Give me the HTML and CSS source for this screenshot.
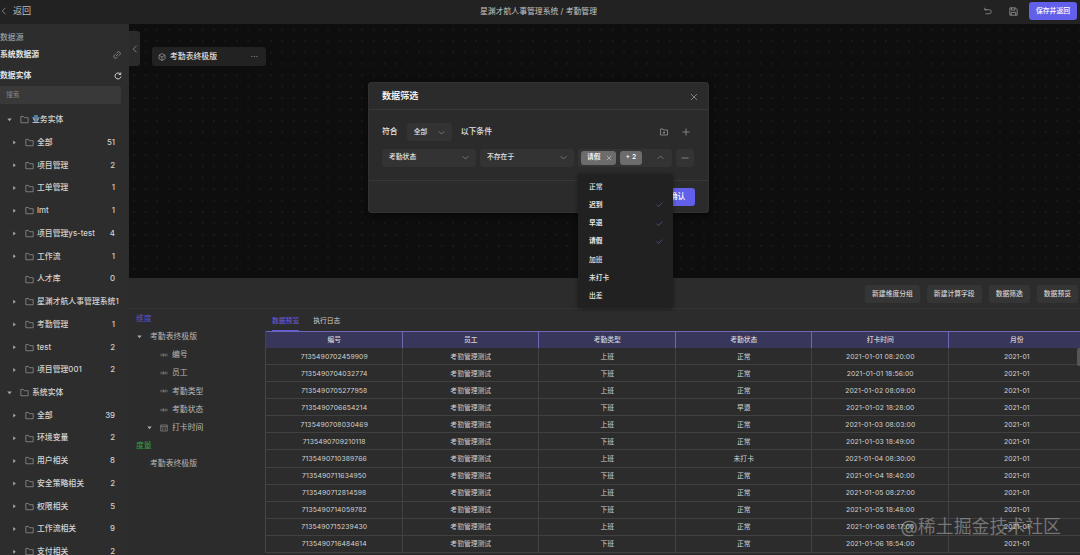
FILE: index.html
```html
<!DOCTYPE html>
<html lang="zh-CN">
<head>
    <meta charset="utf-8">
    <title>考勤管理</title>
    <link rel="stylesheet" href="styles.css">
</head>
<body>
    <!-- icons -->
    <svg class="sprite">
        <symbol id="folder" viewBox="0 0 16 16"><path d="M1.5 2.5h4.6l1.6 2.3h6.8v9h-13z"/></symbol>
        <symbol id="down" viewBox="0 0 16 16"><path d="M1.5 5L8 11.5 14.500 5"/></symbol>
        <symbol id="left" viewBox="0 0 16 16"><path d="M11 1.5L4.5 8l6.5 6.5"/></symbol>
        <symbol id="x" viewBox="0 0 16 16"><path d="M2 2l12 12M14 2L2 14"/></symbol>
        <symbol id="check" viewBox="0 0 16 16"><path d="M1.5 8.5L6 12.5l8.5-9"/></symbol>
        <symbol id="field" viewBox="0 0 16 16"><path d="M4 5L1 8l3 3M12 5l3 3-3 3M6 6h2v4H6zM10.5 6v4"/></symbol>
    </svg>

    <div class="header">
        <div class="back"><svg class="icon"><use href="#left"/></svg><span>返回</span></div>
        <div class="headerTitle">星渊才航人事管理系统 / 考勤管理</div>
        <div class="headerTools">
            <svg class="icon" viewBox="0 0 16 16"><path d="M1.5 1.5v4h4M1.5 5.5h9a4 4 0 0 1 0 8H3"/></svg>
            <svg class="icon save" viewBox="0 0 16 16"><path d="M1.5 1.5h10l3 3v10h-13zM4.5 1.5v4h6v-4M4 14.5v-5h8v5"/></svg>
            <div class="btnPrimary">保存并返回</div>
        </div>
    </div>

    <div class="main">
        <div class="sidebar">
            <div class="sideLabel">数据源</div>
            <div class="sideTitle">系统数据源
                <svg class="icon" viewBox="0 0 16 16"><path d="M6.5 4.5l2-2a3.200 3.200 0 0 1 5 5l-2 2M9.5 11.5l-2 2a3.200 3.200 0 0 1-5-5l2-2M5.5 10.5l5-5"/></svg>
            </div>
            <div class="sideTitle entity">数据实体
                <svg class="icon reload" viewBox="0 0 16 16"><path d="M13 4.5A6 6 0 1 0 14 9M13.5 1v4h-4"/></svg>
            </div>
            <div class="search">搜索</div>
            <div class="tree">
                <div class="node root"><i class="caret open"></i><svg class="icon"><use href="#folder"/></svg><span>业务实体</span></div>
                <div class="node"><i class="caret"></i><svg class="icon"><use href="#folder"/></svg><span>全部</span><b>51</b></div>
                <div class="node"><i class="caret"></i><svg class="icon"><use href="#folder"/></svg><span>项目管理</span><b>2</b></div>
                <div class="node"><i class="caret"></i><svg class="icon"><use href="#folder"/></svg><span>工单管理</span><b>1</b></div>
                <div class="node"><i class="caret"></i><svg class="icon"><use href="#folder"/></svg><span>lmt</span><b>1</b></div>
                <div class="node"><i class="caret"></i><svg class="icon"><use href="#folder"/></svg><span>项目管理ys-test</span><b>4</b></div>
                <div class="node"><i class="caret"></i><svg class="icon"><use href="#folder"/></svg><span>工作流</span><b>1</b></div>
                <div class="node"><i class="caret none"></i><svg class="icon"><use href="#folder"/></svg><span>人才库</span><b>0</b></div>
                <div class="node"><i class="caret"></i><svg class="icon"><use href="#folder"/></svg><span class="long">星渊才航人事管理系统1</span></div>
                <div class="node"><i class="caret"></i><svg class="icon"><use href="#folder"/></svg><span>考勤管理</span><b>1</b></div>
                <div class="node"><i class="caret"></i><svg class="icon"><use href="#folder"/></svg><span>test</span><b>2</b></div>
                <div class="node"><i class="caret"></i><svg class="icon"><use href="#folder"/></svg><span>项目管理001</span><b>2</b></div>
                <div class="node root"><i class="caret open"></i><svg class="icon"><use href="#folder"/></svg><span>系统实体</span></div>
                <div class="node"><i class="caret"></i><svg class="icon"><use href="#folder"/></svg><span>全部</span><b>39</b></div>
                <div class="node"><i class="caret"></i><svg class="icon"><use href="#folder"/></svg><span>环境变量</span><b>2</b></div>
                <div class="node"><i class="caret"></i><svg class="icon"><use href="#folder"/></svg><span>用户相关</span><b>8</b></div>
                <div class="node"><i class="caret"></i><svg class="icon"><use href="#folder"/></svg><span>安全策略相关</span><b>2</b></div>
                <div class="node"><i class="caret"></i><svg class="icon"><use href="#folder"/></svg><span>权限相关</span><b>5</b></div>
                <div class="node"><i class="caret"></i><svg class="icon"><use href="#folder"/></svg><span>工作流相关</span><b>9</b></div>
                <div class="node"><i class="caret"></i><svg class="icon"><use href="#folder"/></svg><span>支付相关</span><b>2</b></div>
            </div>
        </div>

        <div class="workspace">
            <div class="canvas">
                <div class="collapse"><svg class="icon"><use href="#left"/></svg></div>
                <div class="canvasNode">
                    <svg class="icon" viewBox="0 0 16 16"><path d="M8 1l6 3.500v7L8 15l-6-3.500v-7zM2 4.500L8 8l6-3.500M8 8v7"/></svg>
                    <span>考勤表终极版</span>
                    <em>···</em>
                </div>
            </div>

            <div class="panel">
                <div class="toolbar">
                    <div class="btn">新建维度分组</div>
                    <div class="btn">新建计算字段</div>
                    <div class="btn">数据筛选</div>
                    <div class="btn">数据预览</div>
                </div>
                <div class="panelBody">
                    <div class="fields">
                        <div class="fieldGroup dim">维度</div>
                        <div class="field top"><i class="caret open"></i>考勤表终极版</div>
                        <div class="field"><svg class="icon"><use href="#field"/></svg>编号</div>
                        <div class="field"><svg class="icon"><use href="#field"/></svg>员工</div>
                        <div class="field"><svg class="icon"><use href="#field"/></svg>考勤类型</div>
                        <div class="field"><svg class="icon"><use href="#field"/></svg>考勤状态</div>
                        <div class="field date"><i class="caret open"></i><svg class="icon" viewBox="0 0 16 16"><path d="M1.5 2h13v12h-13zM1.5 5.5h13M4.5 8.500h2M9 8.500h2.500M4.500 11.500h2M9 11.500h2.500"/></svg>打卡时间</div>
                        <div class="fieldGroup measure">度量</div>
                        <div class="field top noCaret">考勤表终极版</div>
                    </div>

                    <div class="preview">
                        <div class="tabs"><span class="active">数据预览</span><span>执行日志</span></div>
                        <div class="tableWrap">
                        <table>
                            <thead>
                                <tr><th>编号</th><th>员工</th><th>考勤类型</th><th>考勤状态</th><th>打卡时间</th><th>月份</th></tr>
                            </thead>
                            <tbody>
                                <tr><td>7135490702459909</td><td>考勤管理测试</td><td>上班</td><td>正常</td><td>2021-01-01 08:20:00</td><td>2021-01</td></tr>
                                <tr><td>7135490704032774</td><td>考勤管理测试</td><td>下班</td><td>正常</td><td>2021-01-01 18:56:00</td><td>2021-01</td></tr>
                                <tr><td>7135490705277958</td><td>考勤管理测试</td><td>上班</td><td>正常</td><td>2021-01-02 08:09:00</td><td>2021-01</td></tr>
                                <tr><td>7135490706654214</td><td>考勤管理测试</td><td>下班</td><td>早退</td><td>2021-01-02 18:28:00</td><td>2021-01</td></tr>
                                <tr><td>7135490708030469</td><td>考勤管理测试</td><td>上班</td><td>正常</td><td>2021-01-03 08:03:00</td><td>2021-01</td></tr>
                                <tr><td>7135490709210118</td><td>考勤管理测试</td><td>下班</td><td>正常</td><td>2021-01-03 18:49:00</td><td>2021-01</td></tr>
                                <tr><td>7135490710389766</td><td>考勤管理测试</td><td>上班</td><td>未打卡</td><td>2021-01-04 08:30:00</td><td>2021-01</td></tr>
                                <tr><td>7135490711634950</td><td>考勤管理测试</td><td>下班</td><td>正常</td><td>2021-01-04 18:40:00</td><td>2021-01</td></tr>
                                <tr><td>7135490712814598</td><td>考勤管理测试</td><td>上班</td><td>正常</td><td>2021-01-05 08:27:00</td><td>2021-01</td></tr>
                                <tr><td>7135490714059782</td><td>考勤管理测试</td><td>下班</td><td>正常</td><td>2021-01-05 18:48:00</td><td>2021-01</td></tr>
                                <tr><td>7135490715239430</td><td>考勤管理测试</td><td>上班</td><td>正常</td><td>2021-01-06 08:17:00</td><td>2021-01</td></tr>
                                <tr><td>7135490716484614</td><td>考勤管理测试</td><td>下班</td><td>正常</td><td>2021-01-06 18:54:00</td><td>2021-01</td></tr>
                            </tbody>
                        </table>
                        <div class="scrollThumb"></div>
                        </div>
                    </div>
                </div>
            </div>
        </div>
    </div>

    <!-- filter dialog -->
    <div class="dialog">
        <div class="dialogHeader">数据筛选<svg class="icon"><use href="#x"/></svg></div>
        <div class="dialogBody">
            <div class="matchRow">
                <span>符合</span>
                <div class="select small">全部<svg class="icon"><use href="#down"/></svg></div>
                <span>以下条件</span>
                <svg class="icon addGroup" viewBox="0 0 16 16"><path d="M1 2h5l1.500 2H15v10H1zM8 7v4.500M5.800 9.200h4.500"/></svg>
                <svg class="icon" viewBox="0 0 16 16"><path d="M8 1v14M1 8h14"/></svg>
            </div>
            <div class="ruleRow">
                <div class="select">考勤状态<svg class="icon"><use href="#down"/></svg></div>
                <div class="select">不存在于<svg class="icon"><use href="#down"/></svg></div>
                <div class="select multi">
                    <span class="tag">请假<svg class="icon"><use href="#x"/></svg></span>
                    <span class="tag">+ 2</span>
                    <svg class="icon up"><use href="#down"/></svg>
                </div>
                <div class="remove"><svg class="icon" viewBox="0 0 16 16"><path d="M1 8h14"/></svg></div>
            </div>
        </div>
        <div class="dialogFooter"><div class="btnPrimary ok">确认</div></div>
        <div class="dropdown">
            <div class="option">正常</div>
            <div class="option on">迟到<svg class="icon"><use href="#check"/></svg></div>
            <div class="option on">早退<svg class="icon"><use href="#check"/></svg></div>
            <div class="option on">请假<svg class="icon"><use href="#check"/></svg></div>
            <div class="option">加班</div>
            <div class="option">未打卡</div>
            <div class="option">出差</div>
        </div>
    </div>

    <div class="watermark">@稀土掘金技术社区</div>
</body>
</html>
```
FILE: styles.css
```css
* {
    box-sizing: border-box;
}

body {
    margin: 0;
    width: 1080px;
    height: 555px;
    overflow: hidden;
    position: relative;
    display: flex;
    flex-direction: column;
    background: #2c2c2c;
    color: #d2d2d2;
    font-family: Inter, "Noto Sans CJK SC", sans-serif;
    font-size: 7.85px;
    line-height: 1.2;
    white-space: nowrap;
}

.sprite {
    display: none;
}

.icon {
    width: 8px;
    height: 8px;
    flex: none;
    fill: none;
    stroke: #a0a0a0;
    stroke-width: 1.4;
}

.header {
    height: 24px;
    flex: none;
    display: grid;
    grid-template-columns: 1fr auto 1fr;
    align-items: center;
    background: #222;
    padding: 0 3px 2px 0;
}

.back {
    display: flex;
    align-items: center;
    gap: 5px;
    font-size: 9.1px;
    color: #bdbdbd;
}

.headerTitle {
    padding-top: 1px;
    color: #c4c4c4;
}

.headerTools {
    display: flex;
    align-items: center;
    justify-content: flex-end;
    gap: 17px;
}

.headerTools .save {
    width: 9px;
    height: 9px;
}

.headerTools .btnPrimary {
    margin-left: -6px;
}

.btnPrimary {
    width: 48px;
    height: 18px;
    border-radius: 3px;
    background: #6260ea;
    color: #fff;
    font-size: 6.8px;
    font-weight: 500;
    display: flex;
    align-items: center;
    justify-content: center;
}

.main {
    flex: 1;
    min-height: 0;
    display: flex;
}

.sidebar {
    width: 129px;
    flex: none;
    background: #2d2d2d;
    padding-top: 8px;
    overflow: hidden;
}

.sideLabel {
    height: 10px;
    line-height: 10px;
    color: #b0b0b0;
}

.sideTitle {
    display: flex;
    align-items: center;
    justify-content: space-between;
    height: 22px;
    padding: 3px 8px 0 0;
    font-weight: 600;
    color: #e2e2e2;
}

.entity {
    height: 21px;
    padding: 2px 7px 0 0;
}

.reload {
    stroke: #e0e0e0;
    stroke-width: 1.8;
}

.search {
    width: 121px;
    height: 18px;
    margin-top: 1px;
    padding-left: 6px;
    line-height: 18px;
    border-radius: 0 2px 2px 0;
    background: #393939;
    color: #858585;
    font-size: 6.8px;
}

.tree {
    padding-top: 4.5px;
}

.node {
    display: flex;
    align-items: center;
    height: 22.74px;
    padding: 0 14px 0 12px;
    font-weight: 500;
}

.node.root {
    padding-left: 7px;
}

.node .icon {
    width: 9px;
    height: 9px;
    margin: 0 3.500px 0 7.500px;
    stroke-width: 1.2;
}

.node b {
    margin-left: auto;
    font-weight: 500;
}

.node .long {
    width: 84px;
    flex: none;
    overflow: hidden;
}

.caret {
    width: 5px;
    height: 5px;
    flex: none;
    background: #aaa;
    clip-path: polygon(25% 10%, 75% 50%, 25% 90%);
}

.caret.open {
    clip-path: polygon(5% 25%, 95% 25%, 50% 80%);
}

.caret.none {
    visibility: hidden;
}

.workspace {
    flex: 1;
    min-width: 0;
    display: flex;
    flex-direction: column;
}

.canvas {
    height: 254px;
    flex: none;
    display: flex;
    align-items: flex-start;
    background: #0e0e0e radial-gradient(circle at center, #222 0, #222 0.5px, transparent 0.9px) 11px 0 / 11.4px 11.4px;
}

.collapse {
    width: 11px;
    height: 35px;
    margin-top: 7px;
    display: flex;
    align-items: center;
    justify-content: center;
    background: #2b2b2b;
    border-radius: 0 3px 3px 0;
}

.canvasNode {
    width: 114px;
    height: 19px;
    margin: 23px 0 0 12px;
    padding: 1px 8px 0 6px;
    display: flex;
    align-items: center;
    gap: 4px;
    border-radius: 3px;
    background: #222;
    color: #e0e0e0;
    font-weight: 500;
}

.canvasNode em {
    margin-left: auto;
    font-style: normal;
    color: #888;
}

.panel {
    flex: 1;
    min-height: 0;
    display: flex;
    flex-direction: column;
    background: #2c2c2c;
}

.toolbar {
    height: 31px;
    flex: none;
    display: flex;
    align-items: center;
    justify-content: flex-end;
    gap: 7px;
    padding: 1px 2px 0 0;
    border-bottom: 1px solid #333;
}

.btn {
    height: 18px;
    line-height: 18px;
    padding: 0 7px;
    border-radius: 3px;
    background: #353535;
    font-size: 6.8px;
    font-weight: 500;
}

.panelBody {
    flex: 1;
    min-height: 0;
    display: flex;
}

.fields {
    width: 136px;
    flex: none;
    padding-top: 0.5px;
    color: #b8b8b8;
}

.fieldGroup,
.field {
    height: 18.2px;
    display: flex;
    align-items: center;
}

.fieldGroup {
    padding-left: 7px;
}

.dim {
    color: #5b50c9;
}

.measure {
    color: #35a046;
}

.field {
    padding-left: 31px;
}

.field .icon {
    margin-right: 4px;
    stroke-width: 1.2;
}

.field.top {
    padding-left: 8px;
}

.field.top .caret {
    margin-right: 8px;
}

.field.noCaret {
    padding-left: 21px;
}

.field.date {
    padding-left: 18px;
}

.field.date .caret {
    margin-right: 8px;
}

.preview {
    flex: 1;
    min-width: 0;
    font-size: 6.8px;
}

.tabs {
    height: 22px;
    display: flex;
    gap: 14px;
    padding-left: 7px;
    line-height: 23px;
}

.tabs .active {
    color: #6558e0;
    border-bottom: 1px solid #6558e0;
    font-weight: 500;
}

.tableWrap {
    position: relative;
}

table {
    width: 820px;
    table-layout: fixed;
    border-spacing: 0;
    border-left: 1px solid #444;
}

th,
td {
    height: 17.07px;
    padding: 1px 0 0 1px;
    text-align: center;
    border-right: 1px solid #414141;
    border-bottom: 1px solid #414141;
    line-height: 8px;
    font-weight: 400;
}

td:first-child {
    letter-spacing: 0.12px;
}

td:nth-child(5) {
    letter-spacing: 0.08px;
}

th {
    padding-top: 0;
    background: #38365a;
    border-top: 1px solid #6c68b4;
    border-right-color: #6c68b4;
    border-bottom: 0;
    font-weight: 500;
}

.scrollThumb {
    position: absolute;
    right: 0;
    top: 17px;
    width: 3px;
    height: 18px;
    border-radius: 2px 0 0 2px;
    background: #555;
}

.dialog {
    position: absolute;
    left: 368px;
    top: 82px;
    width: 341px;
    height: 131px;
    border-radius: 3px;
    background: #2b2b2b;
    border: 1px solid #323232;
    box-shadow: 0 2px 8px rgba(0, 0, 0, 0.5);
}

.dialogHeader {
    height: 27px;
    display: flex;
    align-items: center;
    justify-content: space-between;
    padding: 1px 10px 0 13px;
    border-bottom: 1px solid #383838;
    font-size: 9.1px;
    font-weight: 600;
    color: #f0f0f0;
}

.dialogBody {
    height: 70px;
    padding: 13px 13px 0;
}

.matchRow,
.ruleRow {
    display: flex;
    align-items: center;
    font-weight: 500;
    color: #e2e2e2;
}

.matchRow {
    height: 18px;
    gap: 9px;
}

.matchRow .addGroup {
    margin: 0 5px 0 auto;
}

.matchRow > .icon:last-child {
    margin-right: 5px;
}

.ruleRow {
    margin-top: 7.5px;
    gap: 4px;
}

.select {
    width: 94px;
    height: 18px;
    display: flex;
    align-items: center;
    justify-content: space-between;
    padding: 0 7px;
    border-radius: 3px;
    background: #333;
    font-size: 6.8px;
}

.select .icon {
    width: 7px;
    height: 7px;
}

.select.small {
    width: 45px;
}

.select.multi {
    justify-content: flex-start;
    gap: 4px;
    padding: 0 8px 0 3px;
}

.tag {
    height: 14px;
    display: flex;
    align-items: center;
    gap: 5px;
    padding: 0 4px 0 6px;
    border-radius: 3px;
    background: #6c6c6c;
    color: #fff;
}

.tag + .tag {
    padding: 0 6px;
}

.tag .icon {
    width: 6px;
    height: 6px;
    stroke: #ddd;
}

.up {
    margin-left: auto;
    transform: rotate(180deg);
}

.remove {
    width: 18px;
    height: 18px;
    display: flex;
    align-items: center;
    justify-content: center;
    border-radius: 3px;
    background: #333;
}

.dialogFooter {
    height: 32px;
    display: flex;
    align-items: center;
    justify-content: flex-end;
    padding-right: 13px;
    border-top: 1px solid #383838;
}

.btnPrimary.ok {
    width: 35px;
    font-size: 7.85px;
}

.dropdown {
    position: absolute;
    left: 209px;
    top: 91px;
    width: 95px;
    height: 134px;
    padding: 3.5px 10px 0 11px;
    border-radius: 2px;
    background: #212121;
    box-shadow: 0 1px 4px rgba(0, 0, 0, 0.4);
}

.option {
    height: 18.25px;
    display: flex;
    align-items: center;
    justify-content: space-between;
    font-size: 6.8px;
    font-weight: 500;
    color: #e6e6e6;
}

.option.on {
    font-weight: 700;
}

.option .icon {
    width: 7px;
    height: 7px;
    stroke: #4b5c9c;
    stroke-width: 1.8;
}

.watermark {
    position: absolute;
    right: 19px;
    top: 516px;
    font-size: 17.9px;
    line-height: 22px;
    color: rgba(190, 190, 190, 0.5);
}
```
